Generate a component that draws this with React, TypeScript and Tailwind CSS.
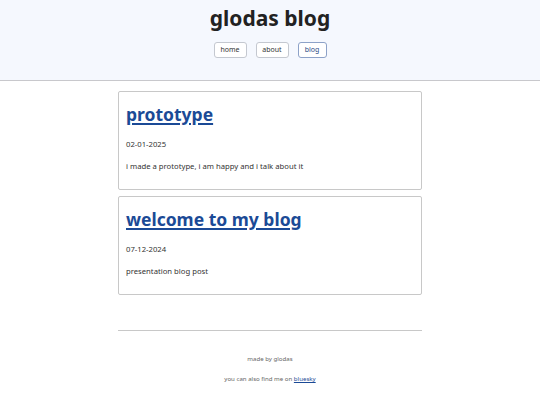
const posts = [
  { title: 'prototype', date: '02-01-2025', text: 'i made a prototype, i am happy and i talk about it' },
  { title: 'welcome to my blog', date: '07-12-2024', text: 'presentation blog post' },
];

const navItems = ['home', 'about', 'blog'];

export default function App() {
  return (
    <div className="min-h-screen bg-white text-[#222] [font-family:'Noto_Sans',sans-serif]">
      {/* Header */}
      <header className="flex h-[81px] flex-col items-center border-b border-[#c8c8cc] bg-[#f5f8fe] pt-[3px]">
        <h1 className="text-[21px] font-bold leading-[30px] text-[#222]">glodas blog</h1>
        <nav className="mt-[9px] flex gap-[9px]">
          {navItems.map((item) => (
            <a
              key={item}
              className={
                item === 'blog'
                  ? 'flex h-[16px] w-[29px] items-center justify-center rounded-[3px] border border-[#8da2c8] bg-white text-[7px] text-[#2a4a85]'
                  : 'flex h-[16px] w-[33px] items-center justify-center rounded-[3px] border border-[#c4c8d0] bg-white text-[7px] text-[#333]'
              }
            >
              {item}
            </a>
          ))}
        </nav>
      </header>

      {/* Posts */}
      <main className="mx-auto mt-[10px] flex w-[304px] flex-col gap-[6px]">
        {posts.map((post) => (
          <article key={post.title} className="h-[99px] rounded-[2px] border border-[#c8c8c8] px-[7px] pt-[11px]">
            <a className="text-[17.5px] font-bold leading-[22px] text-[#1b4a96] underline decoration-[1.5px] underline-offset-[2px]">
              {post.title}
            </a>
            <p className="mt-[12px] text-[7.7px] leading-[11px] text-[#333]">{post.date}</p>
            <p className="mt-[11px] text-[7.7px] leading-[11px] text-[#333]">{post.text}</p>
          </article>
        ))}
      </main>

      {/* Footer */}
      <footer className="mx-auto mt-[35px] w-[304px] border-t border-[#c8c8c8] pt-[23px] text-center text-[6.1px] text-[#666]">
        <p className="leading-[10px]">made by glodas</p>
        <p className="mt-[10px] leading-[10px]">
          you can also find me on <a className="text-[#1b4a96] underline">bluesky</a>
        </p>
      </footer>
    </div>
  );
}
